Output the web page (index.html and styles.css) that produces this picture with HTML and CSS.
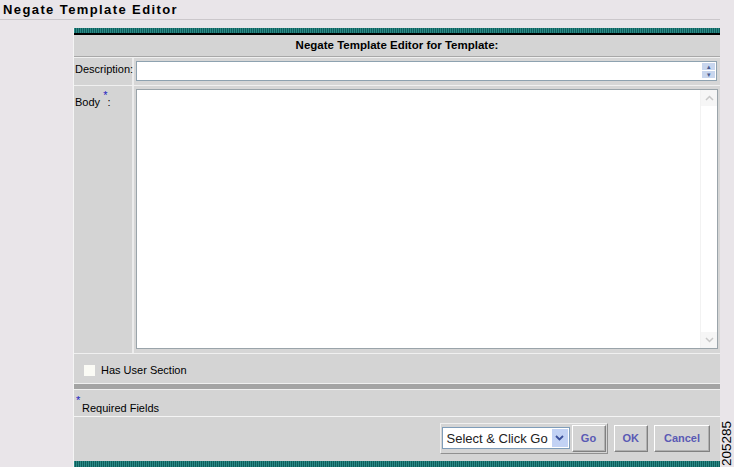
FILE: index.html
```html
<!DOCTYPE html>
<html lang="en">
<head>
    <meta charset="UTF-8">
    <title>Negate Template Editor</title>
    <link rel="stylesheet" href="styles.css">
</head>
<body>
    <h1 class="page-title">Negate Template Editor</h1>

    <div class="panel">
        <div class="stripe"></div>
        <div class="panel-head">Negate Template Editor for Template:</div>

        <div class="field-row desc-row">
            <div class="field-label">Description:</div>
            <div class="field-input">
                <div class="desc-box">
                    <input type="text" class="desc-input">
                    <div class="spin">
                        <span class="spin-btn">&#9652;</span>
                        <span class="spin-btn">&#9662;</span>
                    </div>
                </div>
            </div>
        </div>

        <div class="field-row body-row">
            <div class="field-label">Body <span class="req">*</span>:</div>
            <div class="field-input">
                <div class="body-box">
                    <div class="body-text"></div>
                    <div class="scroll">
                        <span class="scroll-btn">
                            <svg width="9" height="6" viewBox="0 0 9 6"><path d="M1 5 L4.5 1.5 L8 5" fill="none" stroke="#c8c8c8" stroke-width="1.5"/></svg>
                        </span>
                        <span class="scroll-track"></span>
                        <span class="scroll-btn">
                            <svg width="9" height="6" viewBox="0 0 9 6"><path d="M1 1 L4.5 4.5 L8 1" fill="none" stroke="#c8c8c8" stroke-width="1.5"/></svg>
                        </span>
                    </div>
                </div>
            </div>
        </div>

        <div class="check-row">
            <span class="check-box"></span>
            <span>Has User Section</span>
        </div>

        <div class="divider"></div>

        <div class="required-row">
            <span class="req req-star">*</span>
            <span class="req-text">Required Fields</span>
        </div>

        <div class="button-row">
            <div class="go-group">
                <div class="select">
                    <span class="select-text">Select &amp; Click Go</span>
                    <span class="select-arrow">
                        <svg width="9" height="6" viewBox="0 0 9 6"><path d="M1 1 L4.5 4.5 L8 1" fill="none" stroke="#3a4f9a" stroke-width="1.8"/></svg>
                    </span>
                </div>
                <button class="btn">Go</button>
            </div>
            <button class="btn">OK</button>
            <button class="btn btn-wide">Cancel</button>
        </div>

        <div class="stripe stripe-bottom"></div>
    </div>

    <div class="fig-number">205285</div>
</body>
</html>
```

FILE: styles.css
```css
body {
    margin: 0;
    background-color: #e9e5e9;
    font-family: "Liberation Sans", Arial, sans-serif;
    font-size: 11px;
    color: #000000;
    width: 734px;
    height: 467px;
    overflow: hidden;
    position: relative;
}

.page-title {
    margin: 0;
    width: 717px;
    padding: 2px 0 0 3px;
    height: 17px;
    font-size: 13px;
    font-weight: bold;
    letter-spacing: 1.4px;
    line-height: 16px;
    border-bottom: 1px solid #cbc7cb;
}

.panel {
    margin: 8px 0 0 73px;
    width: 647px;
    background-color: #d4d4d4;
    border-left: 1px solid #f4f4f4;
    box-sizing: border-box;
}

.stripe {
    height: 5px;
    background: repeating-linear-gradient(90deg, #2b8a86 0, #2b8a86 1px, #0f5d5c 1px, #0f5d5c 2px);
    border-bottom: 2px solid #000000;
}

.stripe-bottom {
    height: 6px;
    border-bottom: none;
    margin-top: 2px;
}

.panel-head {
    height: 21px;
    line-height: 21px;
    text-align: center;
    font-weight: bold;
    font-size: 11.5px;
    border-bottom: 1px solid #a8a8a8;
    box-shadow: 0 1px 0 #f0f0f0;
    margin-bottom: 1px;
}

.field-row {
    display: grid;
    grid-template-columns: 60px 1fr;
    border-bottom: 1px solid #f0f0f0;
}

.field-label {
    padding: 5px 0 0 1px;
    border-right: 2px solid #ececec;
}

.field-input {
    padding: 3px 0 3px 2px;
    background-color: #d6d6d6;
}

.desc-row {
    height: 27px;
}

.desc-box {
    display: flex;
    width: 581px;
    height: 20px;
    box-sizing: border-box;
    border: 1px solid #8ea2b0;
    background-color: #ffffff;
}

.desc-input {
    flex: 1;
    border: none;
    padding: 0;
    outline: none;
}

.spin {
    display: flex;
    flex-direction: column;
    gap: 1px;
    padding: 1px 1px 1px 0;
}

.spin-btn {
    width: 13px;
    height: 7px;
    background-color: #c8d6ee;
    color: #4a5c90;
    font-size: 7px;
    line-height: 7px;
    text-align: center;
}

.body-row {
    height: 267px;
}

.body-row .field-label {
    padding-top: 10px;
}

.body-row .field-input {
    padding-top: 3px;
}

.req {
    color: #2020c0;
    font-size: 11px;
    position: relative;
    top: -7px;
}

.body-box {
    display: flex;
    width: 582px;
    height: 260px;
    box-sizing: border-box;
    border: 1px solid #9aa4aa;
    background-color: #ffffff;
}

.body-text {
    flex: 1;
}

.scroll {
    width: 16px;
    display: flex;
    flex-direction: column;
    border-left: 1px solid #f2f2f2;
}

.scroll-btn {
    height: 16px;
    display: flex;
    align-items: center;
    justify-content: center;
    background-color: #f6f6f6;
}

.scroll-track {
    flex: 1;
}

.check-row {
    display: flex;
    align-items: center;
    gap: 6px;
    height: 29px;
    padding: 3px 0 0 10px;
    box-sizing: border-box;
    font-size: 11px;
}

.check-box {
    width: 11px;
    height: 11px;
    background-color: #fbfbf5;
}

.divider {
    height: 5px;
    background-color: #a4a4a4;
    border-top: 1px solid #f0f0f0;
    border-bottom: 1px solid #f0f0f0;
}

.required-row {
    height: 26px;
    position: relative;
    border-bottom: 1px solid #f4f4f4;
}

.req-star {
    position: absolute;
    left: 2px;
    top: 4px;
}

.req-text {
    position: absolute;
    left: 8px;
    top: 12px;
}

.button-row {
    display: flex;
    justify-content: flex-end;
    align-items: center;
    gap: 6px;
    height: 42px;
    padding-right: 10px;
}

.go-group {
    display: flex;
    align-items: center;
    gap: 2px;
    padding: 1px;
    border: 1px solid #f0f0f0;
    border-right-color: #909090;
    border-bottom-color: #909090;
}

.select {
    display: flex;
    align-items: center;
    width: 128px;
    height: 22px;
    box-sizing: border-box;
    border: 1px solid #7f9db9;
    background-color: #ffffff;
}

.select-text {
    flex: 1;
    padding-left: 4px;
    font-size: 13px;
    color: #222222;
    white-space: nowrap;
}

.select-arrow {
    width: 16px;
    height: 18px;
    margin-right: 1px;
    display: flex;
    align-items: center;
    justify-content: center;
    background-color: #c2d2f4;
}

.btn {
    height: 27px;
    min-width: 34px;
    padding: 0 8px;
    background-color: #d4d4d4;
    border: 1px solid;
    border-color: #ffffff #808080 #808080 #ffffff;
    box-shadow: inset -1px -1px 0 #b0b0b0;
    font-family: "Liberation Sans", Arial, sans-serif;
    font-size: 11px;
    font-weight: bold;
    color: #5a5ab4;
}

.btn-wide {
    min-width: 56px;
}

.fig-number {
    position: absolute;
    left: 720px;
    top: 466px;
    transform: rotate(-90deg);
    transform-origin: 0 0;
    font-size: 13.5px;
    line-height: 14px;
    color: #000000;
}
```
